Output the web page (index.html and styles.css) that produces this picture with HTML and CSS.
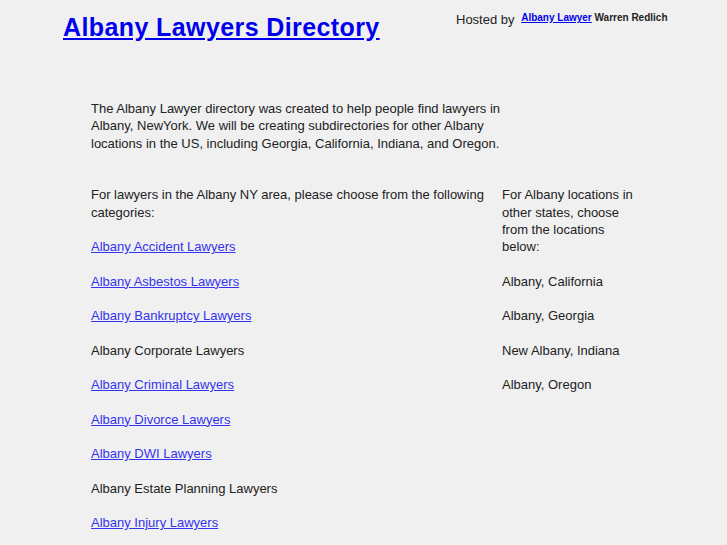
FILE: index.html
```html
<!DOCTYPE html>
<html>
<head>
<meta charset="utf-8">
<link rel="stylesheet" href="styles.css">
</head>
<body>
<div class="header">
  <h1 class="title"><a href="#">Albany Lawyers Directory</a></h1>
  <div class="hosted">Hosted by <span class="small"><a href="#">Albany Lawyer</a> Warren Redlich</span></div>
</div>
<div class="main">
  <div class="col-left">
    <p class="intro">The Albany Lawyer directory was created to help people find lawyers in Albany, NewYork. We will be creating subdirectories for other Albany locations in the US, including Georgia, California, Indiana, and Oregon.</p>
    <p>For lawyers in the Albany NY area, please choose from the following categories:</p>
    <p><a href="#">Albany Accident Lawyers</a></p>
    <p><a href="#">Albany Asbestos Lawyers</a></p>
    <p><a href="#">Albany Bankruptcy Lawyers</a></p>
    <p>Albany Corporate Lawyers</p>
    <p><a href="#">Albany Criminal Lawyers</a></p>
    <p><a href="#">Albany Divorce Lawyers</a></p>
    <p><a href="#">Albany DWI Lawyers</a></p>
    <p>Albany Estate Planning Lawyers</p>
    <p><a href="#">Albany Injury Lawyers</a></p>
  </div>
  <div class="col-right">
    <p>For Albany locations in other states, choose from the locations below:</p>
    <p>Albany, California</p>
    <p>Albany, Georgia</p>
    <p>New Albany, Indiana</p>
    <p>Albany, Oregon</p>
  </div>
</div>
</body>
</html>
```
FILE: styles.css
```css
html, body {
  margin: 0;
  padding: 0;
  background: #f0f0f0;
}
body {
  font-family: "Liberation Sans", Arial, sans-serif;
  color: #222222;
}
a {
  color: #3434ee;
}
.header {
  display: flex;
  align-items: flex-start;
  height: 100px;
}
.title {
  margin: 0;
  padding: 13px 0 0 63px;
  width: 393px;
  font-size: 25px;
  font-weight: bold;
  line-height: 28px;
  letter-spacing: 0.4px;
  white-space: nowrap;
}
.title a {
  color: #0000ee;
}
.hosted {
  padding-top: 11px;
  font-size: 13px;
  line-height: 17px;
}
.small {
  font-size: 10px;
  font-weight: bold;
  position: relative;
  top: -3px;
  margin-left: 3px;
}
.small a {
  color: #0000ee;
}
.main {
  display: grid;
  grid-template-columns: 411px 140px;
  padding-left: 91px;
  font-size: 13px;
  line-height: 17.25px;
}
.main p {
  margin: 0 0 17.25px 0;
}
.main p.intro {
  margin-bottom: 34.5px;
}
.col-right {
  padding-top: 86.25px;
}
```
